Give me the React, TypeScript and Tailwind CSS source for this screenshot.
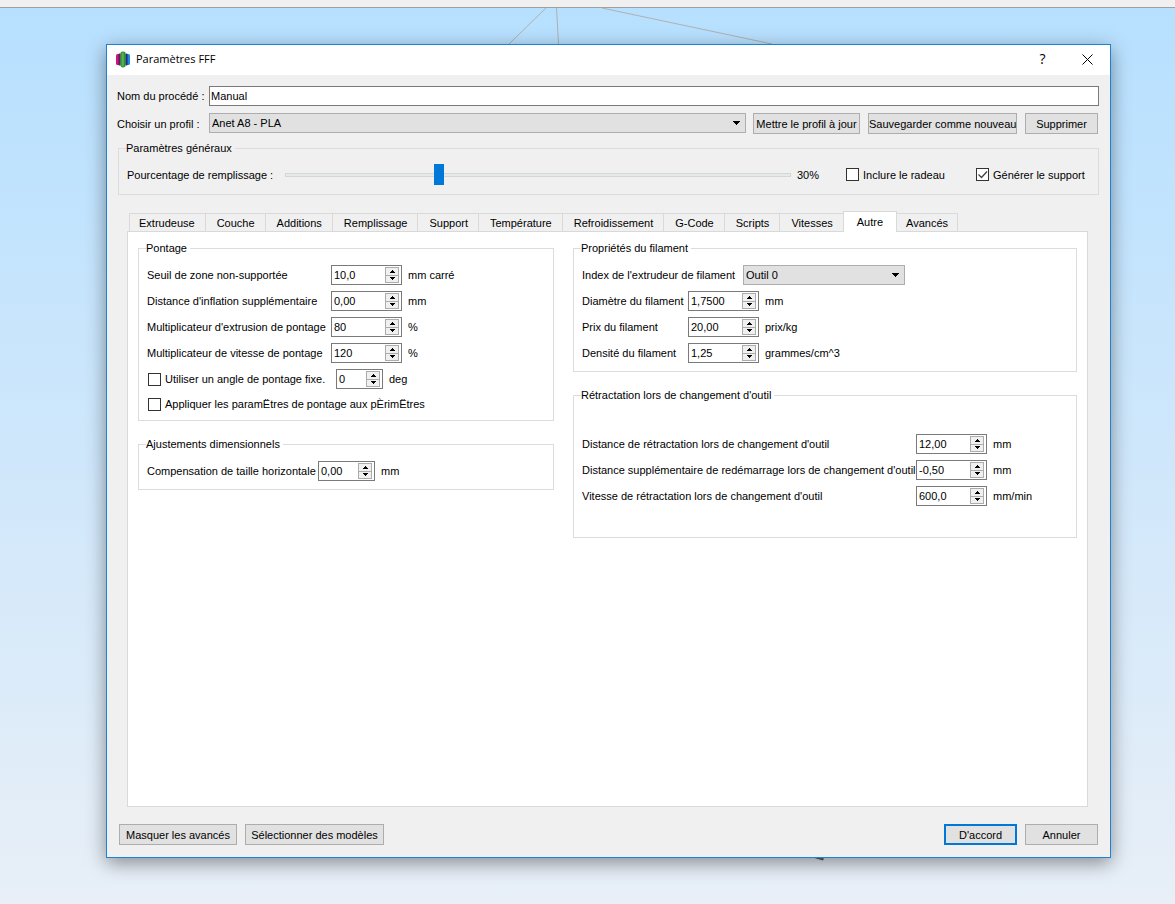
import { useState, type ReactNode } from "react";

const TABS = [
  "Extrudeuse",
  "Couche",
  "Additions",
  "Remplissage",
  "Support",
  "Température",
  "Refroidissement",
  "G-Code",
  "Scripts",
  "Vitesses",
  "Autre",
  "Avancés",
];

const buttonStyle =
  "h-[21px] shrink-0 whitespace-nowrap border border-[#adadad] bg-[#e1e1e1] text-center hover:border-[#0078d7] hover:bg-[#e5f1fb]";

function Group({
  title,
  className,
  children,
}: {
  title: string;
  className: string;
  children: ReactNode;
}) {
  return (
    <fieldset className={`border border-[#dcdcdc] px-2 ${className}`}>
      <legend className="-ml-px h-4 pr-[3px] leading-4">{title}</legend>
      {children}
    </fieldset>
  );
}

function SpinBox({
  id,
  initial,
  width = "w-[71px]",
}: {
  id: string;
  initial: string;
  width?: string;
}) {
  const [value, setValue] = useState(initial);
  const decimals = initial.split(",")[1]?.length ?? 0;

  const step = (delta: number) => {
    const next = Number(value.replace(",", ".")) + delta;
    setValue(next.toFixed(decimals).replace(".", ","));
  };

  return (
    <span
      className={`flex h-5 shrink-0 border border-[#7a7a7a] bg-white py-px pr-[2px] ${width}`}
    >
      <input
        id={id}
        type="text"
        value={value}
        onChange={(event) => setValue(event.target.value)}
        className="w-0 min-w-0 flex-1 pl-[2px] outline-none"
      />
      <span className="flex w-[14px] flex-col">
        <button
          type="button"
          aria-label="Augmenter"
          onClick={() => step(1)}
          className="flex flex-1 items-center justify-center border border-[#acacac] bg-[#f0f0f0]"
        >
          <svg width="5" height="3" viewBox="0 0 5 3" shapeRendering="crispEdges">
            <path d="M2 0h1v1h1v1h1v1H0V2h1V1h1z" fill="#000" />
          </svg>
        </button>
        <button
          type="button"
          aria-label="Diminuer"
          onClick={() => step(-1)}
          className="flex flex-1 items-center justify-center border border-t-0 border-[#acacac] bg-[#f0f0f0]"
        >
          <svg width="5" height="3" viewBox="0 0 5 3" shapeRendering="crispEdges">
            <path d="M0 0h5v1H4v1H3v1H2V2H1V1H0z" fill="#000" />
          </svg>
        </button>
      </span>
    </span>
  );
}

function SpinRow({
  id,
  label,
  initial,
  unit,
  labelWidth,
  width,
}: {
  id: string;
  label: string;
  initial: string;
  unit: string;
  labelWidth: string;
  width?: string;
}) {
  return (
    <div className="flex h-5 items-center gap-[6px]">
      <label htmlFor={id} className={`shrink-0 whitespace-nowrap ${labelWidth}`}>
        {label}
      </label>
      <SpinBox id={id} initial={initial} width={width} />
      <span>{unit}</span>
    </div>
  );
}

function CheckBox({
  label,
  defaultChecked = false,
  className = "",
}: {
  label: string;
  defaultChecked?: boolean;
  className?: string;
}) {
  return (
    <label
      className={`flex shrink-0 items-center gap-1 pl-px whitespace-nowrap ${className}`}
    >
      <span className="relative h-[13px] w-[13px]">
        <input
          type="checkbox"
          defaultChecked={defaultChecked}
          className="peer block h-[13px] w-[13px] appearance-none border border-[#333333] bg-white"
        />
        <svg
          viewBox="0 0 13 13"
          className="pointer-events-none absolute inset-0 hidden h-[13px] w-[13px] peer-checked:block"
        >
          <path d="M2.5 6.5l3 3 5.5-6" fill="none" stroke="#444" strokeWidth="1.3" />
        </svg>
      </span>
      {label}
    </label>
  );
}

function DropDown({
  id,
  options,
  className,
}: {
  id: string;
  options: string[];
  className: string;
}) {
  return (
    <span className={`relative block h-5 ${className}`}>
      <select
        id={id}
        className="block h-5 w-full appearance-none border border-[#adadad] bg-[#e1e1e1] pl-[2px] outline-none"
      >
        {options.map((option) => (
          <option key={option}>{option}</option>
        ))}
      </select>
      <svg
        width="7"
        height="4"
        viewBox="0 0 7 4"
        shapeRendering="crispEdges"
        className="pointer-events-none absolute top-2 right-[6px]"
      >
        <path d="M0 0h7v1H6v1H5v1H4v1H3V3H2V2H1V1H0z" fill="#000" />
      </svg>
    </span>
  );
}

function AppIcon() {
  return (
    <svg width="14" height="17" viewBox="0 0 14 17">
      <rect x="0" y="3" width="4" height="11" rx="1.6" fill="#d4127c" />
      <rect x="2.4" y="2.4" width="2.4" height="12" rx="1" fill="#5b1d6e" />
      <rect x="10" y="3" width="4" height="11" rx="1.6" fill="#1f86d8" />
      <rect x="9.2" y="2.4" width="2.4" height="12" rx="1" fill="#1c2f8c" />
      <rect x="4.3" y="0.5" width="5.4" height="16" rx="2.4" fill="#2f8f36" />
      <rect x="5.6" y="1.5" width="2.2" height="14" rx="1.1" fill="#58b04a" />
    </svg>
  );
}

export default function App() {
  const [activeTab, setActiveTab] = useState("Autre");
  const [infill, setInfill] = useState(30);

  return (
    <div className="relative flex min-h-screen flex-col bg-linear-to-b from-[#b6e0ff] via-[#cfe7fb] to-[#e8eff7] font-['Liberation_Sans',Arial,sans-serif] text-[11px] leading-[14px] text-black">
      <div className="h-2 border-b border-[#a0a0a0] bg-[#f0f0f0]" />

      {/* build volume edges seen behind the dialog */}
      <svg
        width="1175"
        height="904"
        viewBox="0 0 1175 904"
        className="pointer-events-none absolute top-0 left-0"
        fill="none"
        stroke="#b0b0b0"
      >
        <path d="M546 8L509 44M556.500 8L558.500 44M602 8L772 44" />
        <path d="M813 857l10 3 0-3" stroke="#555" fill="#777" />
      </svg>

      <main className="relative mt-9 mr-16 mb-[46px] ml-[106px] flex flex-1 flex-col border border-[#1883d7] bg-[#f0f0f0] shadow-[0_5px_18px_rgba(0,0,0,0.42)]">
        <header className="flex h-[30px] items-center bg-white pb-[2px] pl-[9px] font-['Open_Sans','Noto_Sans',sans-serif]">
          <AppIcon />
          <h1 className="ml-[6px] flex-1">Paramètres FFF</h1>
          <button type="button" aria-label="Aide" className="h-full w-[45px] text-sm">
            ?
          </button>
          <button
            type="button"
            aria-label="Fermer"
            className="flex h-full w-[45px] items-center justify-center"
          >
            <svg width="11" height="11" viewBox="0 0 11 11" stroke="#000">
              <path d="M.5 .5l10 10M10.500 .5l-10 10" />
            </svg>
          </button>
        </header>

        <form
          className="flex flex-1 flex-col pt-[11px] pr-[11px] pb-3 pl-[10px]"
          onSubmit={(event) => event.preventDefault()}
        >
          <div className="flex h-5 items-center gap-[6px]">
            <label htmlFor="process-name" className="w-[86px] shrink-0 whitespace-nowrap">
              Nom du procédé :
            </label>
            <input
              id="process-name"
              type="text"
              defaultValue="Manual"
              className="h-5 min-w-0 flex-1 border border-[#7a7a7a] bg-white pl-px outline-none"
            />
          </div>

          <div className="mt-[7px] flex h-[21px] items-center pr-px">
            <label
              htmlFor="profile"
              className="mr-[6px] w-[86px] shrink-0 whitespace-nowrap"
            >
              Choisir un profil :
            </label>
            <DropDown
              id="profile"
              options={["Anet A8 - PLA"]}
              className="mr-[7px] min-w-0 flex-1 self-start"
            />
            <button type="button" className={`${buttonStyle} mr-2 w-[107px]`}>
              Mettre le profil à jour
            </button>
            <button type="button" className={`${buttonStyle} mr-2 w-[149px]`}>
              Sauvegarder comme nouveau
            </button>
            <button type="button" className={`${buttonStyle} w-[73px]`}>
              Supprimer
            </button>
          </div>

          <Group title="Paramètres généraux" className="mt-[6px] ml-px pt-[8px] pb-[9px]">
            <div className="flex h-[21px] items-center gap-[6px]">
              <label htmlFor="infill" className="w-[152px] shrink-0 whitespace-nowrap">
                Pourcentage de remplissage :
              </label>
              <input
                id="infill"
                type="range"
                min={0}
                max={100}
                value={infill}
                onChange={(event) => setInfill(Number(event.target.value))}
                className="h-[21px] min-w-0 flex-1 appearance-none bg-transparent [&::-webkit-slider-runnable-track]:h-1 [&::-webkit-slider-runnable-track]:border [&::-webkit-slider-runnable-track]:border-[#d6d6d6] [&::-webkit-slider-runnable-track]:bg-[#e7eaea] [&::-webkit-slider-thumb]:-mt-[10px] [&::-webkit-slider-thumb]:h-[21px] [&::-webkit-slider-thumb]:w-[10px] [&::-webkit-slider-thumb]:appearance-none [&::-webkit-slider-thumb]:bg-[#0078d7]"
              />
              <output htmlFor="infill" className="w-[42px] shrink-0">
                {infill}%
              </output>
              <CheckBox label="Inclure le radeau" className="w-[124px]" />
              <CheckBox label="Générer le support" defaultChecked className="w-[115px]" />
            </div>
          </Group>

          <div role="tablist" className="mt-4 ml-3 flex h-5 items-end">
            {TABS.map((tab) => (
              <button
                key={tab}
                type="button"
                role="tab"
                aria-selected={tab === activeTab}
                onClick={() => setActiveTab(tab)}
                className={
                  tab === activeTab
                    ? "relative -mb-px h-[21px] border border-b-0 border-[#d9d9d9] bg-white px-[13px]"
                    : "h-[18px] border-t border-l border-[#d9d9d9] pr-[10px] pl-[11px] first:pl-[9px] last:border-r last:border-l-0 last:px-[9px]"
                }
              >
                {tab}
              </button>
            ))}
          </div>

          <div
            role="tabpanel"
            className="mr-[11px] ml-[10px] grid flex-1 grid-cols-[416fr_504fr] content-start gap-[19px] border border-[#d9d9d9] bg-white px-[10px] pt-2"
          >
            <div className="flex flex-col gap-[15px]">
              <Group title="Pontage" className="pt-[9px] pb-[6px]">
                <div className="flex flex-col gap-[6px]">
                  <SpinRow
                    id="unsupported-area"
                    label="Seuil de zone non-supportée"
                    initial="10,0"
                    unit="mm carré"
                    labelWidth="w-[178px]"
                  />
                  <SpinRow
                    id="extra-inflation"
                    label="Distance d'inflation supplémentaire"
                    initial="0,00"
                    unit="mm"
                    labelWidth="w-[178px]"
                  />
                  <SpinRow
                    id="bridge-extrusion"
                    label="Multiplicateur d'extrusion de pontage"
                    initial="80"
                    unit="%"
                    labelWidth="w-[178px]"
                  />
                  <SpinRow
                    id="bridge-speed"
                    label="Multiplicateur de vitesse de pontage"
                    initial="120"
                    unit="%"
                    labelWidth="w-[178px]"
                  />
                  <div className="flex h-5 items-center gap-[6px]">
                    <CheckBox label="Utiliser un angle de pontage fixe." className="w-[183px]" />
                    <SpinBox id="bridge-angle" initial="0" width="w-[47px]" />
                    <label htmlFor="bridge-angle">deg</label>
                  </div>
                </div>
                <CheckBox
                  label="Appliquer les paramËtres de pontage aux pÈrimËtres"
                  className="mt-[5px] h-5"
                />
              </Group>

              <Group title="Ajustements dimensionnels" className="pt-[9px] pb-2">
                <SpinRow
                  id="horizontal-size"
                  label="Compensation de taille horizontale"
                  initial="0,00"
                  unit="mm"
                  labelWidth="w-[165px]"
                  width="w-[57px]"
                />
              </Group>
            </div>

            <div className="flex flex-col gap-[15px]">
              <Group title="Propriétés du filament" className="pt-[9px] pb-2">
                <div className="flex flex-col gap-[6px]">
                  <div className="flex h-5 items-center gap-[6px]">
                    <label
                      htmlFor="filament-index"
                      className="w-[155px] shrink-0 whitespace-nowrap"
                    >
                      Index de l'extrudeur de filament
                    </label>
                    <DropDown
                      id="filament-index"
                      options={["Outil 0"]}
                      className="w-[162px]"
                    />
                  </div>
                  <SpinRow
                    id="filament-diameter"
                    label="Diamètre du filament"
                    initial="1,7500"
                    unit="mm"
                    labelWidth="w-[100px]"
                  />
                  <SpinRow
                    id="filament-price"
                    label="Prix du filament"
                    initial="20,00"
                    unit="prix/kg"
                    labelWidth="w-[100px]"
                  />
                  <SpinRow
                    id="filament-density"
                    label="Densité du filament"
                    initial="1,25"
                    unit="grammes/cm^3"
                    labelWidth="w-[100px]"
                  />
                </div>
              </Group>

              <Group
                title="Rétractation lors de changement d'outil"
                className="pt-[31px] pb-[31px]"
              >
                <div className="flex flex-col gap-[6px]">
                  <SpinRow
                    id="retraction-distance"
                    label="Distance de rétractation lors de changement d'outil"
                    initial="12,00"
                    unit="mm"
                    labelWidth="w-[328px]"
                  />
                  <SpinRow
                    id="restart-distance"
                    label="Distance supplémentaire de redémarrage lors de changement d'outil"
                    initial="-0,50"
                    unit="mm"
                    labelWidth="w-[328px]"
                  />
                  <SpinRow
                    id="retraction-speed"
                    label="Vitesse de rétractation lors de changement d'outil"
                    initial="600,0"
                    unit="mm/min"
                    labelWidth="w-[328px]"
                  />
                </div>
              </Group>
            </div>
          </div>

          <footer className="mt-[17px] flex gap-2 pr-px pl-[2px]">
            <button type="button" className={`${buttonStyle} w-[118px]`}>
              Masquer les avancés
            </button>
            <button type="button" className={`${buttonStyle} w-[139px]`}>
              Sélectionner des modèles
            </button>
            <button
              type="submit"
              className="ml-auto h-[21px] w-[73px] border-2 border-[#0078d7] bg-[#e1e1e1]"
            >
              D'accord
            </button>
            <button type="button" className={`${buttonStyle} w-[73px]`}>
              Annuler
            </button>
          </footer>
        </form>
      </main>
    </div>
  );
}
